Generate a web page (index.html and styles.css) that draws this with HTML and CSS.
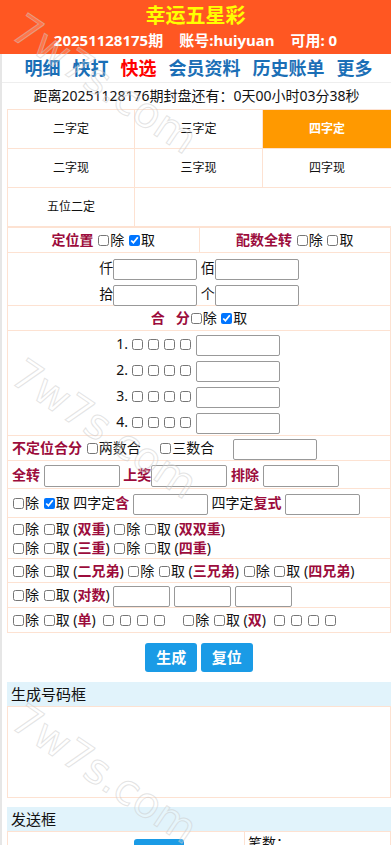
FILE: index.html
```html
<!DOCTYPE html>
<html lang="zh-CN">
<head>
    <meta charset="UTF-8">
    <meta name="viewport" content="width=device-width, initial-scale=1.0">
    <title>幸运五星彩</title>
    <link rel="stylesheet" href="styles.css">
</head>
<body>
    <div class="top">
        <div class="title">幸运五星彩</div>
        <div class="info"><span>20251128175期</span><span>账号:huiyuan</span><span>可用: 0</span></div>
    </div>

    <div class="page">
        <div class="menu">
            <a href="#">明细</a>
            <a href="#">快打</a>
            <a href="#" class="on">快选</a>
            <a href="#">会员资料</a>
            <a href="#">历史账单</a>
            <a href="#">更多</a>
        </div>
        <div class="countdown">距离20251128176期封盘还有：0天00小时03分38秒</div>

        <!-- play types -->
        <div class="types">
            <div class="type">二字定</div>
            <div class="type">三字定</div>
            <div class="type active">四字定</div>
            <div class="type">二字现</div>
            <div class="type">三字现</div>
            <div class="type">四字现</div>
            <div class="type">五位二定</div>
            <div class="type empty"></div>
        </div>

        <div class="form">
            <div class="row split">
                <div class="half"><b class="red">定位置</b> <input type="checkbox">除 <input type="checkbox" checked>取</div>
                <div class="half"><b class="red">配数全转</b> <input type="checkbox">除 <input type="checkbox">取</div>
            </div>
            <div class="row center places">
                <div class="line">仟<input type="text" class="txt"> 佰<input type="text" class="txt"></div>
                <div class="line">拾<input type="text" class="txt"> 个<input type="text" class="txt"></div>
            </div>
            <div class="row center"><b class="red">合&nbsp;&nbsp;&nbsp;分</b><input type="checkbox">除 <input type="checkbox" checked>取</div>
            <div class="row center sums">
                <div class="line">1.<input type="checkbox"><input type="checkbox"><input type="checkbox"><input type="checkbox"> <input type="text" class="txt"></div>
                <div class="line">2.<input type="checkbox"><input type="checkbox"><input type="checkbox"><input type="checkbox"> <input type="text" class="txt"></div>
                <div class="line">3.<input type="checkbox"><input type="checkbox"><input type="checkbox"><input type="checkbox"> <input type="text" class="txt"></div>
                <div class="line">4.<input type="checkbox"><input type="checkbox"><input type="checkbox"><input type="checkbox"> <input type="text" class="txt"></div>
            </div>
            <div class="row">
                <b class="red">不定位合分</b> <input type="checkbox">两数合 <span class="sp"></span><input type="checkbox">三数合 <span class="sp"></span><input type="text" class="txt">
            </div>
            <div class="row h28">
                <b class="red">全转</b> <input type="text" class="txt short"> <b class="red">上奖</b><input type="text" class="txt short"> <b class="red">排除</b> <input type="text" class="txt short">
            </div>
            <div class="row h29">
                <input type="checkbox">除 <input type="checkbox" checked>取 四字定<b class="red">含</b> <input type="text" class="txt mid"> 四字定<b class="red">复式</b> <input type="text" class="txt mid">
            </div>
            <div class="row double">
                <div class="line2"><input type="checkbox">除 <input type="checkbox">取 (<b class="red">双重</b>) <input type="checkbox">除 <input type="checkbox">取 (<b class="red">双双重</b>)</div>
                <div class="line2"><input type="checkbox">除 <input type="checkbox">取 (<b class="red">三重</b>) <input type="checkbox">除 <input type="checkbox">取 (<b class="red">四重</b>)</div>
            </div>
            <div class="row h24">
                <input type="checkbox">除 <input type="checkbox">取 (<b class="red">二兄弟</b>) <input type="checkbox">除 <input type="checkbox">取 (<b class="red">三兄弟</b>) <input type="checkbox">除 <input type="checkbox">取 (<b class="red">四兄弟</b>)
            </div>
            <div class="row">
                <input type="checkbox">除 <input type="checkbox">取 (<b class="red">对数</b>) <input type="text" class="txt pair"> <input type="text" class="txt pair"> <input type="text" class="txt pair">
            </div>
            <div class="row">
                <input type="checkbox">除 <input type="checkbox">取 (<b class="red">单</b>) <input type="checkbox" class="gap"><input type="checkbox" class="gap"><input type="checkbox" class="gap"><input type="checkbox" class="gap"><span class="sp"></span><input type="checkbox">除 <input type="checkbox">取 (<b class="red">双</b>) <input type="checkbox" class="gap"><input type="checkbox" class="gap"><input type="checkbox" class="gap"><input type="checkbox" class="gap">
            </div>
        </div>

        <div class="actions">
            <button type="button">生成</button>
            <button type="button">复位</button>
        </div>

        <div class="box">
            <div class="box-title">生成号码框</div>
            <div class="box-body"></div>
        </div>

        <div class="box">
            <div class="box-title">发送框</div>
            <div class="send">
                <div class="send-left"><input type="text" class="txt"><button type="button">发送</button></div>
                <div class="send-right">笔数：</div>
            </div>
        </div>
    </div>

    <!-- watermark -->
    <div class="mark m1">7w7s.com</div>
    <div class="mark m2">7w7s.com</div>
    <div class="mark m3">7w7s.com</div>
</body>
</html>
```

FILE: styles.css
```css
body {
    margin: 0;
    font-family: "Noto Sans", "Noto Sans CJK SC", sans-serif;
    font-size: 14px;
    color: #111;
    background: #fff;
    overflow-x: hidden;
}

.top {
    background-color: #ff5722;
    text-align: center;
    height: 54px;
    padding-top: 3px;
    box-sizing: border-box;
}

.title {
    color: #ffff00;
    font-size: 20px;
    font-weight: bold;
    line-height: 26px;
}

.info {
    color: #fff;
    font-size: 15px;
    font-weight: bold;
    line-height: 22px;
}

.info span {
    margin: 0 8px;
}

.page {
    border-left: 2px solid #e6e6e6;
    padding-left: 5px;
}

.menu {
    display: flex;
    justify-content: center;
    gap: 12px;
    height: 28px;
    line-height: 29px;
    border-bottom: 1px solid #eeeeee;
    margin-left: -5px;
    padding-left: 4px;
}

.menu a {
    color: #1b6fb6;
    font-size: 18px;
    font-weight: bold;
    text-decoration: none;
}

.menu a.on {
    color: #ff0000;
}

.countdown {
    text-align: center;
    line-height: 26px;
    margin-left: -5px;
}

.types {
    display: grid;
    grid-template-columns: 127px 128px 129px;
    border-top: 1px solid #fde2d2;
    border-left: 1px solid #fde2d2;
}

.type {
    height: 38px;
    line-height: 38px;
    text-align: center;
    font-size: 12px;
    border-right: 1px solid #fde2d2;
    border-bottom: 1px solid #fde2d2;
}

.type.active {
    background-color: #ff9900;
    color: #fff;
    font-weight: bold;
}

.type.empty {
    grid-column: span 2;
    border-right: none;
}

.form {
    border-left: 1px solid #fde2d2;
    border-right: 1px solid #fde2d2;
    border-top: 1px solid #fde2d2;
    width: 384px;
    box-sizing: border-box;
}

.row {
    border-bottom: 1px solid #fde2d2;
    padding: 0 4px;
    height: 25px;
    line-height: 24px;
    white-space: nowrap;
    box-sizing: border-box;
}

.row.h24 {
    height: 24px;
    line-height: 23px;
}

.row.h28 {
    height: 28px;
    line-height: 27px;
}

.row.h29 {
    height: 29px;
    line-height: 28px;
}

.row.double {
    height: 41px;
    padding-top: 1px;
}

.row.center {
    text-align: center;
}

.row.split {
    display: flex;
    padding: 0;
    height: 25px;
}

.half {
    flex: 1;
    text-align: center;
}

.half + .half {
    border-left: 1px solid #fde2d2;
}

.red {
    color: #9c0c3c;
}

.places {
    padding: 2px 0 0;
    height: 53px;
}

.places .line {
    height: 26px;
    line-height: 26px;
}

.sums {
    padding: 0;
    height: 105px;
}

.sums .line {
    height: 26px;
    line-height: 26px;
    padding-right: 2px;
}

.line2 {
    line-height: 19px;
}

input[type="checkbox"] {
    width: 11px;
    height: 11px;
    margin: 0 1px 0 1px;
    vertical-align: -1px;
}

.sums input[type="checkbox"] {
    margin: 0 1px 0 4px;
}

input.gap {
    margin: 0 2px 0 4px;
}

.txt {
    width: 84px;
    height: 21px;
    border: 1px solid #999;
    border-radius: 2px;
    padding: 0;
    box-sizing: border-box;
    vertical-align: middle;
}

.txt.short {
    width: 76px;
    height: 22px;
}

.txt.mid {
    width: 75px;
}

.txt.pair {
    width: 57px;
}

.sp {
    display: inline-block;
    width: 15px;
}

.actions {
    text-align: center;
    padding: 10px 0;
    line-height: 0;
}

.actions button,
.send button {
    background-color: #1a9be6;
    color: #fff;
    border: none;
    border-radius: 3px;
    font-family: inherit;
    font-size: 15px;
    font-weight: 600;
    width: 52px;
    height: 29px;
    line-height: 29px;
    padding: 0;
    cursor: pointer;
}

.box {
    margin-bottom: 9px;
}

.box-title {
    background-color: #e1f3fb;
    font-size: 15px;
    line-height: 24px;
    padding-left: 4px;
}

.box-body {
    height: 92px;
    border: 1px solid #fde2d2;
    box-sizing: border-box;
}

.send {
    display: flex;
    border: 1px solid #fde2d2;
    height: 40px;
}

.send-left {
    width: 236px;
    padding: 7px 0 0 36px;
    box-sizing: border-box;
}

.send-left .txt {
    width: 84px;
    margin-right: 6px;
}

.send-left button {
    width: 50px;
}

.send-right {
    border-left: 1px solid #fde2d2;
    padding: 0 0 0 3px;
}

.mark {
    position: absolute;
    font-family: "DejaVu Sans", sans-serif;
    font-size: 42px;
    color: rgba(255, 255, 255, 0.2);
    -webkit-text-stroke: 1px rgba(200, 200, 200, 0.5);
    transform: rotate(34deg);
    transform-origin: left top;
    pointer-events: none;
    white-space: nowrap;
}

.m1 {
    left: 30px;
    top: 4px;
}

.m2 {
    left: 30px;
    top: 349px;
}

.m3 {
    left: 30px;
    top: 694px;
}
```
